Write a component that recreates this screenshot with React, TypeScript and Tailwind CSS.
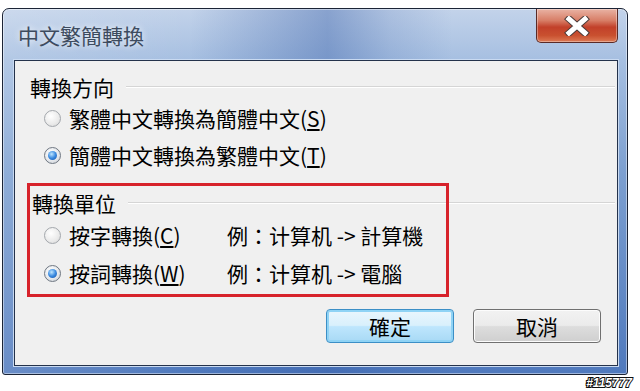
import React from 'react';

const font = { fontFamily: '"Noto Sans CJK TC", "Noto Sans CJK SC", "Liberation Sans", sans-serif' };

function Radio({ checked }: { checked?: boolean }) {
  return (
    <span
      className={
        checked
          ? 'w-[17px] h-[17px] rounded-full border border-[#6f7782] bg-[radial-gradient(circle_at_40%_35%,#ffffff,#e3e6ea_60%,#c4c9d0)] flex items-center justify-center shrink-0'
          : 'w-[17px] h-[17px] rounded-full border border-[#a3a7ac] bg-[radial-gradient(circle_at_40%_35%,#ffffff,#eaeaea_60%,#d2d2d2)] shrink-0'
      }
    >
      {checked && (
        <span className="w-[9px] h-[9px] rounded-full bg-[radial-gradient(circle_at_40%_35%,#bfe6ff,#3a8ae0_50%,#0f4ea6)]" />
      )}
    </span>
  );
}

function GroupLabel({ text, className }: { text: string; className?: string }) {
  return (
    <div className={'flex items-center h-[24px] ' + (className ?? '')}>
      <span className="text-[21px] leading-[24px] text-black">{text}</span>
      <div className="flex-1 ml-[12px] mr-[2px] h-[2px] border-t border-[#d5d5d5] border-b border-b-white" />
    </div>
  );
}

export default function App() {
  return (
    <div className="w-[640px] h-[391px] bg-white overflow-hidden flex flex-col" style={font}>
      {/* window frame */}
      <div className="ml-[2px] mt-[8px] w-[626px] h-[367px] rounded-t-[7px] rounded-b-[3px] border border-[#1b2436] bg-[linear-gradient(90deg,rgba(255,255,255,0.15)_0%,transparent_30%,rgba(50,90,165,0.4)_52%,rgba(50,90,165,0.15)_62%,transparent_72%),linear-gradient(180deg,#c3d3ea_0%,#a6bfe1_14%,#7c9fd0_45%,#4f79bd_100%)] shadow-[inset_0_0_0_1px_rgba(255,255,255,0.45)] flex flex-col">
        {/* title bar */}
        <div className="h-[51px] flex items-start justify-between">
          <div className="ml-[15px] mt-[13px] text-[21px] leading-[26px] text-[#3d4b5f] [text-shadow:0_0_6px_rgba(255,255,255,0.9)]">
            中文繁簡轉換
          </div>
          <div className="mr-[9px] w-[82px] h-[34px] rounded-b-[5px] border border-t-0 border-[#5a2a26] bg-[linear-gradient(180deg,#e9b3a4_0%,#d77d66_35%,#c2402a_55%,#c9502f_80%,#dc7a55_100%)] shadow-[inset_0_0_0_1px_rgba(255,255,255,0.35)] flex items-center justify-center">
            <svg width="26" height="20" viewBox="0 0 26 20">
              <path d="M5 3 L21 17 M21 3 L5 17" stroke="#4a3a38" strokeWidth="7" strokeLinecap="square" />
              <path d="M5 3 L21 17 M21 3 L5 17" stroke="#ffffff" strokeWidth="5" strokeLinecap="square" />
            </svg>
          </div>
        </div>

        {/* client area */}
        <div className="ml-[11px] w-[604px] h-[306px] border border-[#24324b] shadow-[0_0_0_1px_#c9daf1] bg-[#f0f0f0] relative flex flex-col pl-[15px] text-black">
          <GroupLabel text="轉換方向" className="mt-[14px]" />
          <div className="flex items-center h-[24px] mt-[7px] ml-[14px]">
            <Radio />
            <span className="ml-[8px] text-[21px] leading-[24px]">
              繁體中文轉換為簡體中文(<u>S</u>)
            </span>
          </div>
          <div className="flex items-center h-[24px] mt-[13px] ml-[14px]">
            <Radio checked />
            <span className="ml-[8px] text-[21px] leading-[24px]">
              簡體中文轉換為繁體中文(<u>T</u>)
            </span>
          </div>

          <GroupLabel text="轉換單位" className="mt-[24px] ml-[2px]" />
          <div className="flex items-center h-[24px] mt-[8px] ml-[14px]">
            <Radio />
            <span className="ml-[8px] w-[158px] text-[21px] leading-[24px]">
              按字轉換(<u>C</u>)
            </span>
            <span className="text-[21px] leading-[24px]">例：计算机 -&gt; 計算機</span>
          </div>
          <div className="flex items-center h-[24px] mt-[14px] ml-[14px]">
            <Radio checked />
            <span className="ml-[8px] w-[158px] text-[21px] leading-[24px]">
              按詞轉換(<u>W</u>)
            </span>
            <span className="text-[21px] leading-[24px]">例：计算机 -&gt; 電腦</span>
          </div>

          {/* buttons */}
          <div className="flex justify-end gap-[19px] mt-[24px] pr-[16px]">
            <button className="w-[128px] h-[34px] rounded-[4px] border border-[#3c8fc6] shadow-[inset_0_0_0_2px_#8fd3f5] bg-[linear-gradient(180deg,#eaf6fd_0%,#d9f0fc_48%,#bee6fd_52%,#a7d9f5_100%)] text-[21px] leading-[24px] text-black">
              確定
            </button>
            <button className="w-[128px] h-[34px] rounded-[4px] border border-[#707070] shadow-[inset_0_0_0_1px_#fcfcfc] bg-[linear-gradient(180deg,#f2f2f2_0%,#ebebeb_48%,#dddddd_52%,#cfcfcf_100%)] text-[21px] leading-[24px] text-black">
              取消
            </button>
          </div>

          {/* red highlight annotation */}
          <div className="absolute left-[12px] top-[122px] w-[422px] h-[114px] border-[3px] border-[#d7222b] pointer-events-none" />
        </div>
      </div>

      <div className="flex justify-end pr-[8px] mt-[2px]">
        <span className="text-[12px] leading-[13px] font-bold italic text-white [-webkit-text-stroke:2px_#111] [paint-order:stroke_fill]" style={{ fontFamily: '"Liberation Sans", sans-serif' }}>
          #115777
        </span>
      </div>
    </div>
  );
}
